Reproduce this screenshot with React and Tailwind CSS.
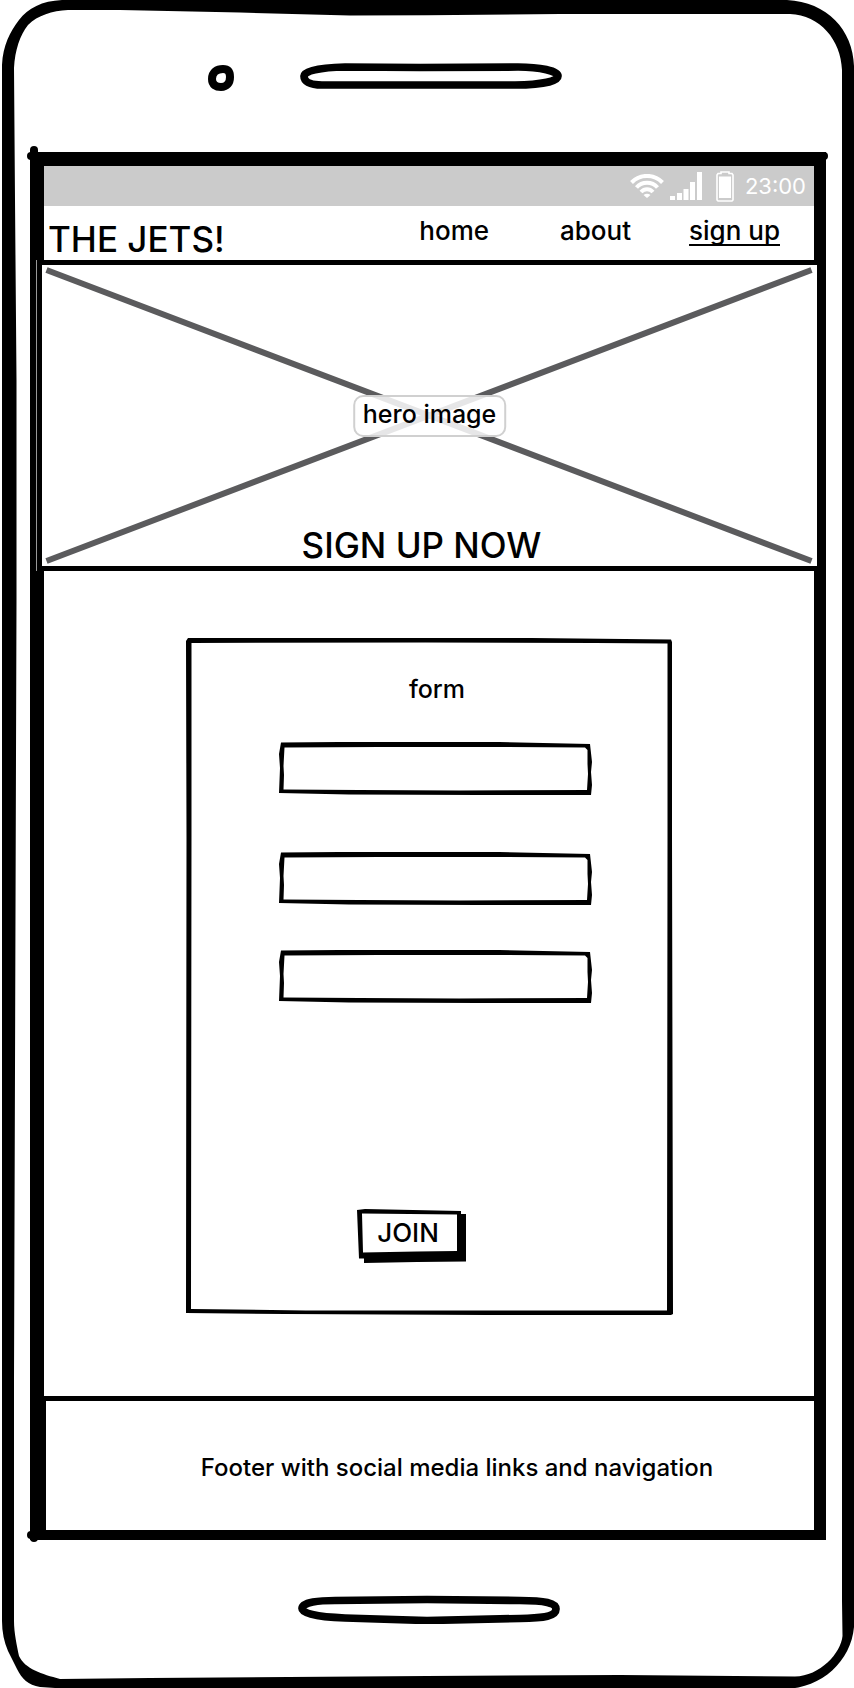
import React from "react";

function PhoneOutline() {
  return (
    <svg
      aria-hidden="true"
      className="pointer-events-none absolute inset-0 h-full w-full"
      viewBox="0 0 854 1688"
      preserveAspectRatio="none"
    >
      <path
        fillRule="evenodd"
        d="M62 0H787C827 2 853 30 854 66V1626C851 1660 822 1687 785 1688H70L40 1686C28 1684 22 1678 17 1668L8 1650Q2 1636 2 1620V65C3 45 10 32 19 20C28 8 42 1 62 0Z
        M68 10C52 11 38 15 28 25C20 35 15 50 14 68L15 200L16.500 380L16.500 600L14 1380V1620C14 1632 17 1645 19 1655C25 1668 42 1673 60 1678L150 1677L427 1675L620 1674L795 1675.500C820 1675 841 1652 842.500 1635L842 1600V70C841 40 820 15 790 14H560L427 15.300L350 15.500L240 12.500L120 10Z"
      />
    </svg>
  );
}

/* Uneven pen-drawn rectangle that stretches over the box it sits in. */
function PenFrame({ d, viewBox }) {
  return (
    <svg
      aria-hidden="true"
      className="pointer-events-none absolute inset-0 h-full w-full"
      viewBox={viewBox}
      preserveAspectRatio="none"
    >
      <path fillRule="evenodd" d={d} />
    </svg>
  );
}

const CARD =
  "M2 0L100 -0.500L300 -0.500L486 1.500L487 4V200L488 677L485 678.500L300 678L100 677L0 676L0.500 200L0 3Z M5.500 5V200L5 672L120 673.500L300 673.500H482L482.500 200V5.500L410 5L240 4.500Z";
const FIELD =
  "M2 0.500L60 0H220L311 2L313 20L312 30L313 43L312 53L200 53L70 52.500L0 51L1 26L0 12Z M5.500 5.500L4.500 24L5 33L4.500 47.500L80 48L180 48.500L308 48L309 32L308.500 22V8L306 5.500L220 5H100Z";
const BUTTON =
  "M0 1L8 0L104 2V5H109V52.500L60 53L7 54V49.500H2Z M5 4.500L6 43.500L60 42.500L100 42V5.500Z";

function TextField({ label, className }) {
  return (
    <div className={"relative h-[53px] w-full " + className}>
      <PenFrame d={FIELD} viewBox="0 0 313 53" />
      <input type="text" aria-label={label} className="relative h-full w-full bg-transparent px-4 outline-none" />
    </div>
  );
}

function StatusBar() {
  return (
    <div className="flex h-10 items-center justify-end bg-[#cbcbcb] pr-2 text-white">
      <svg aria-hidden="true" className="mr-[6px] h-6 w-[34px]" viewBox="0 0 34 24" fill="none" stroke="currentColor" strokeWidth="4">
        <path d="M1.500 8.500C10 -0.300 24 -0.300 32.500 8.500" />
        <path d="M6.500 13.500C12 7.200 22 7.200 27.500 13.500" />
        <path d="M11 18C14.500 14.200 19.500 14.200 23 18" />
        <path d="M13.500 21Q17 18.500 20.500 21L17 24Z" fill="currentColor" stroke="none" />
      </svg>
      <svg aria-hidden="true" className="mr-[14px] h-7 w-8" viewBox="0 0 32 28" fill="currentColor">
        <path d="M0 24h5v4H0zM7 21h5v7H7zM13.500 17h5v11h-5zM20 10h5v18h-5zM27 0h5v28h-5z" />
      </svg>
      <svg aria-hidden="true" className="mr-[11px] h-[31px] w-[18px]" viewBox="0 0 18 31">
        <path d="M2 2.500H5V1H13V2.500H16L17 4V29L16 30H2L1 29V4Z" fill="none" stroke="currentColor" strokeWidth="1.600" />
        <path d="M3 5.500H15V27H3Z" fill="currentColor" />
      </svg>
      <span className="text-[22px] font-normal leading-10">23:00</span>
    </div>
  );
}

function Header() {
  return (
    <header className="flex h-[54px] items-start justify-between pl-1 pr-[34px]">
      <h1 className="pt-[11px] text-[35px] leading-[44px]">THE JETS!</h1>
      <nav className="flex pt-[9px] text-[26px] leading-[32px]">
        <a href="#home" className="mr-[71px]">home</a>
        <a href="#about" className="mr-[58px]">about</a>
        <a href="#signup" className="underline decoration-2 underline-offset-[4px] [text-decoration-skip-ink:none]">sign up</a>
      </nav>
    </header>
  );
}

function Hero() {
  return (
    <section className="relative -ml-[7px] -mr-2 flex h-[311px] flex-col items-center justify-end border-5 border-black bg-white shadow-[-1px_0_0_#999]">
      <svg
        aria-hidden="true"
        className="absolute inset-0 h-full w-full"
        viewBox="0 0 775 301"
        preserveAspectRatio="none"
        stroke="#5b5b5d"
        strokeWidth="6"
      >
        <path d="M4.500 5L769.500 296M4.500 296L769.500 5" />
      </svg>
      <p className="absolute left-1/2 top-[130px] -translate-x-1/2 whitespace-nowrap rounded-[10px] border-2 border-[#d0d0d0] bg-white/85 px-2 pb-1 text-[25px] leading-[34px]">
        hero image
      </p>
      <h2 className="relative pr-4 text-[35px] leading-[42px]">SIGN UP NOW</h2>
    </section>
  );
}

function SignUpForm() {
  return (
    <form className="relative mx-auto mt-[67px] flex min-h-[677px] w-[487px] max-w-full flex-col items-center" onSubmit={(e) => e.preventDefault()}>
      <PenFrame d={CARD} viewBox="0 0 488 678" />
      <h3 className="ml-4 mt-[35px] text-[25px] leading-[32px]">form</h3>
      <div className="ml-3 mt-[37px] flex w-[313px] flex-col">
        <TextField label="Name" className="mb-[57px]" />
        <TextField label="Email" className="mb-[45px]" />
        <TextField label="Password" className="" />
      </div>
      <button type="submit" className="relative mr-9 mt-[206px] h-[54px] w-[109px] pb-[6px] pr-[6px] text-[26px] leading-[32px]">
        <PenFrame d={BUTTON} viewBox="0 0 109 54" />
        <span className="relative">JOIN</span>
      </button>
    </form>
  );
}

export default function App() {
  return (
    <div className="relative w-full bg-white font-['Inter','Noto_Sans',sans-serif] font-medium text-black">
      <PhoneOutline />
      <div className="relative grid grid-cols-[1fr_auto_1fr] items-start pb-[61px] pl-2 pt-[63px]">
        <svg aria-hidden="true" className="mr-[66px] h-[28px] w-[26px] justify-self-end" viewBox="0 0 26 28" fill="none" stroke="black" strokeWidth="8">
          <path d="M15 6C9 6 4 9 4 16C4 22 8 24 13 24C19 24 22 20 22 14C22 9 20 6 15 6Z" />
        </svg>
        <svg aria-hidden="true" className="h-[26px] w-[262px]" viewBox="0 0 262 26" fill="none" stroke="black" strokeWidth="7.700">
          <path d="M45 4L120 4.500L218 4C240 4 258 8 258 13C258 18 242 22 215 22H22C9 22 4 18 4 13C4 8 20 4.500 45 4Z" />
        </svg>
      </div>

      <div className="relative ml-[30px] mr-7 border-b-[10px] border-l-14 border-r-12 border-t-14 border-black bg-white">
        <span aria-hidden="true" className="absolute -left-[14px] -top-5 h-5 w-2 rounded-t-full bg-black" />
        <span aria-hidden="true" className="absolute -left-[17px] -top-[14px] h-2 w-5 rounded-l-full bg-black" />
        <span aria-hidden="true" className="absolute -right-[14px] -top-[14px] h-2 w-5 rounded-r-full bg-black" />
        <span aria-hidden="true" className="absolute -bottom-[9px] -left-[17px] h-2 w-5 rounded-l-full bg-black" />
        <span aria-hidden="true" className="absolute -bottom-3 -left-[14px] h-5 w-2 rounded-b-full bg-black" />
        <StatusBar />
        <Header />
        <Hero />
        <main>
          <SignUpForm />
        </main>
        <footer className="mt-[81px] flex h-[134px] items-center justify-center border-l-2 border-t-5 border-black pl-[54px] pt-1 text-[24px] leading-[32px]">
          Footer with social media links and navigation
        </footer>
      </div>

      <div className="relative flex justify-center pb-[65px] pl-1 pt-[55px]">
        <svg aria-hidden="true" className="h-[29px] w-[262px]" viewBox="0 0 262 29" fill="none" stroke="black" strokeWidth="7.700">
          <path d="M37 5.500L129 4.500L222 5.500C247 5.500 258 8 258 14C258 21 247 23 222 23.500L129 25.500L47 23C17 22 4 18 4 13.500C4 7 22 5.500 37 5.500Z" />
        </svg>
      </div>
    </div>
  );
}
